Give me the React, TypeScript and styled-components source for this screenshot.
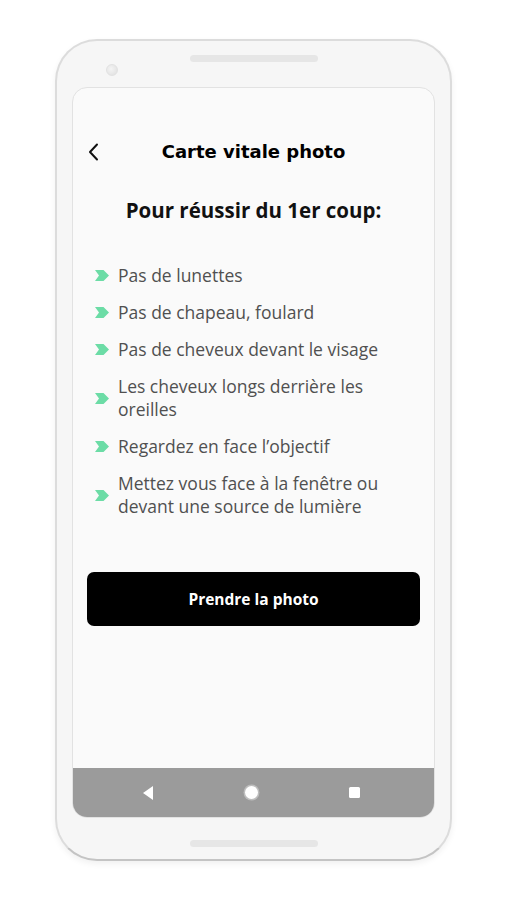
import React from 'react';
import styled, { createGlobalStyle } from 'styled-components';

const GlobalStyle = createGlobalStyle`
  html, body {
    margin: 0;
    padding: 0;
    background: #ffffff;
  }
  body {
    font-family: 'Open Sans', 'Liberation Sans', sans-serif;
  }
`;

const tips = [
  'Pas de lunettes',
  'Pas de chapeau, foulard',
  'Pas de cheveux devant le visage',
  'Les cheveux longs derrière les oreilles',
  'Regardez en face l’objectif',
  'Mettez vous face à la fenêtre ou devant une source de lumière',
];

function BackChevron() {
  return (
    <svg width="12" height="18" viewBox="0 0 12 18">
      <path d="M9 1.5 L2 9 L9 16.5" fill="none" stroke="#111" strokeWidth="2" strokeLinecap="round" strokeLinejoin="round" />
    </svg>
  );
}

function TipBullet() {
  return (
    <svg width="14" height="11" viewBox="0 0 14 11">
      <polygon points="0,0 8.5,0 14,5.5 8.5,11 0,11 4,5.5" fill="#6cdca6" />
    </svg>
  );
}

function NavBack() {
  return (
    <svg width="12" height="14" viewBox="0 0 12 14">
      <polygon points="11,0 11,14 1,7" fill="#ffffff" />
    </svg>
  );
}

export default function App() {
  return (
    <Page>
      <GlobalStyle />
      <Phone>
        <TopBezel>
          <Camera />
          <Speaker />
          <span />
        </TopBezel>

        <Screen>
          <Content>
            <Header>
              <BackButton>
                <BackChevron />
              </BackButton>
              <Title>Carte vitale photo</Title>
              <span />
            </Header>

            <Subtitle>Pour réussir du 1er coup:</Subtitle>

            <TipList>
              {tips.map((tip) => (
                <TipRow key={tip}>
                  <TipBullet />
                  <TipText>{tip}</TipText>
                </TipRow>
              ))}
            </TipList>

            <PrimaryButton>Prendre la photo</PrimaryButton>
          </Content>

          <NavBar>
            <NavSlot>
              <NavBack />
            </NavSlot>
            <NavSlot>
              <HomeDot />
            </NavSlot>
            <NavSlot>
              <RecentSquare />
            </NavSlot>
          </NavBar>
        </Screen>

        <BottomBezel>
          <Speaker />
        </BottomBezel>
      </Phone>
    </Page>
  );
}

const Page = styled.div`
  display: flex;
  justify-content: center;
  padding-top: 39px;
  min-height: 900px;
  box-sizing: border-box;
`;

const Phone = styled.div`
  width: 397px;
  height: 822px;
  box-sizing: border-box;
  display: flex;
  flex-direction: column;
  background: #f6f6f6;
  border: 2px solid #dcdcdc;
  border-bottom-color: #c4c4c4;
  border-radius: 42px;
  box-shadow: 0 3px 6px rgba(0, 0, 0, 0.06);
`;

const TopBezel = styled.div`
  height: 46px;
  display: grid;
  grid-template-columns: 1fr 128px 1fr;
  align-items: start;
`;

const Camera = styled.div`
  width: 12px;
  height: 12px;
  margin: 23px 0 0 49px;
  border-radius: 50%;
  background: radial-gradient(circle at 40% 40%, #f4f4f4, #dedede);
  border: 1px solid #e2e2e2;
  box-sizing: border-box;
`;

const Speaker = styled.div`
  width: 128px;
  height: 7px;
  margin-top: 14px;
  border-radius: 4px;
  background: #e6e6e6;
`;

const Screen = styled.div`
  width: 363px;
  height: 731px;
  margin: 0 auto;
  box-sizing: border-box;
  display: flex;
  flex-direction: column;
  background: #fafafa;
  border: 1px solid #e2e2e2;
  border-radius: 15px;
  overflow: hidden;
`;

const Content = styled.div`
  flex: 1;
  display: flex;
  flex-direction: column;
  padding: 49px 14px 0 14px;
`;

const Header = styled.div`
  display: grid;
  grid-template-columns: 40px 1fr 40px;
  align-items: center;
  height: 28px;
`;

const BackButton = styled.div`
  display: flex;
  align-items: center;
  padding-left: 1px;
  padding-top: 2px;
`;

const Title = styled.div`
  font-family: 'DejaVu Sans', 'Liberation Sans', sans-serif;
  font-weight: 700;
  font-size: 18px;
  color: #000;
  text-align: center;
`;

const Subtitle = styled.div`
  margin-top: 32px;
  font-family: 'Open Sans', 'Liberation Sans', sans-serif;
  font-weight: 700;
  font-size: 20.5px;
  line-height: 26px;
  color: #111;
  text-align: center;
`;

const TipList = styled.div`
  margin-top: 41px;
  display: flex;
  flex-direction: column;
  gap: 14px;
  padding-left: 8px;
`;

const TipRow = styled.div`
  display: flex;
  align-items: center;
  gap: 9px;
`;

const TipText = styled.div`
  font-family: 'Open Sans', 'Liberation Sans', sans-serif;
  font-size: 17.5px;
  line-height: 23px;
  color: #505050;
  max-width: 270px;
`;

const PrimaryButton = styled.button`
  margin-top: 54px;
  height: 54px;
  width: 333px;
  border: none;
  border-radius: 7px;
  background: #000;
  color: #fff;
  font-family: 'Open Sans', 'Liberation Sans', sans-serif;
  font-weight: 700;
  font-size: 15.5px;
  cursor: pointer;
`;

const NavBar = styled.div`
  height: 49px;
  flex-shrink: 0;
  display: flex;
  justify-content: center;
  align-items: center;
  gap: 89px;
  padding-right: 5px;
  background: #9b9b9b;
`;

const NavSlot = styled.div`
  width: 14px;
  height: 14px;
  display: flex;
  align-items: center;
  justify-content: center;
`;

const HomeDot = styled.div`
  width: 13px;
  height: 13px;
  border-radius: 50%;
  background: #fff;
  box-shadow: 0 0 0 1.5px #bdbdbd;
`;

const RecentSquare = styled.div`
  width: 11px;
  height: 11px;
  border-radius: 1.5px;
  background: #fff;
`;

const BottomBezel = styled.div`
  flex: 1;
  display: flex;
  justify-content: center;
  padding-top: 8px;
`;
